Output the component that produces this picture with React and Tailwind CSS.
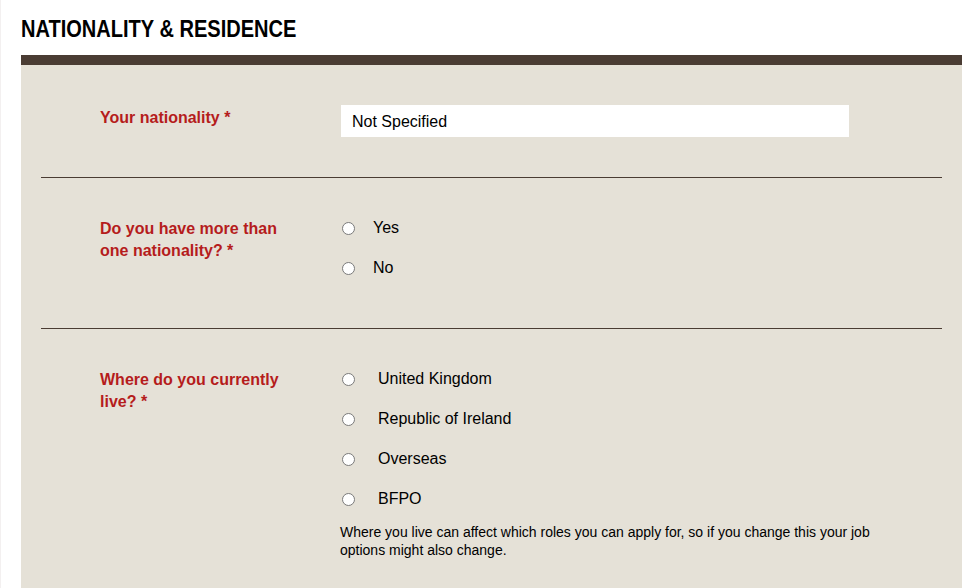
import React from "react";

function Radio({ label, gap }) {
  return (
    <div className="flex items-center h-5">
      <span className="w-[13px] h-[13px] rounded-full border border-[#7a7a7a] bg-white shrink-0 ml-px"></span>
      <span className={gap}>{label}</span>
    </div>
  );
}

export default function App() {
  return (
    <div
      className="w-[980px] h-[588px] overflow-hidden bg-white border-l border-[#f3f0f0] text-black"
      style={{ fontFamily: '"Liberation Sans", Arial, sans-serif' }}
    >
      <div className="pl-5 pr-[18px]">
        <h1 className="pt-[15px] h-[55px] text-[24px] leading-[28px] font-bold whitespace-nowrap">
          <span className="inline-block origin-left scale-x-[0.835]">NATIONALITY &amp; RESIDENCE</span>
        </h1>
        <div className="h-[10px] bg-[#4a3c33]"></div>
        <div className="bg-[#e5e1d7] px-5 h-[600px]">
          {/* Section 1 */}
          <div className="flex pt-10 pb-10 border-b border-[#4a3c33]">
            <div className="w-[300px] pl-[59px] pt-[2px] text-[16px] leading-[22px] font-bold text-[#b51c1c]">
              Your nationality *
            </div>
            <div className="w-[508px] h-8 bg-white pl-[11px] pt-[2px] flex items-center text-[16px]">
              Not Specified
            </div>
          </div>
          {/* Section 2 */}
          <div className="flex pt-10 pb-[50px] border-b border-[#4a3c33]">
            <div className="w-[300px] pl-[59px] text-[16px] leading-[22px] font-bold text-[#b51c1c]">
              <div className="w-[190px]">Do you have more than one nationality? *</div>
            </div>
            <div className="flex flex-col gap-5 text-[16px]">
              <Radio label="Yes" gap="ml-[18px]" />
              <Radio label="No" gap="ml-[18px]" />
            </div>
          </div>
          {/* Section 3 */}
          <div className="flex pt-10">
            <div className="w-[300px] pl-[59px] text-[16px] leading-[22px] font-bold text-[#b51c1c]">
              <div className="w-[190px]">Where do you currently live? *</div>
            </div>
            <div className="flex flex-col text-[16px] -ml-px">
              <div className="flex flex-col gap-5 ml-px">
                <Radio label="United Kingdom" gap="ml-[23px]" />
                <Radio label="Republic of Ireland" gap="ml-[23px]" />
                <Radio label="Overseas" gap="ml-[23px]" />
                <Radio label="BFPO" gap="ml-[23px]" />
              </div>
              <p className="mt-[14px] w-[560px] text-[14px] leading-[18px]">
                Where you live can affect which roles you can apply for, so if you change this your job options might also change.
              </p>
            </div>
          </div>
        </div>
      </div>
    </div>
  );
}
